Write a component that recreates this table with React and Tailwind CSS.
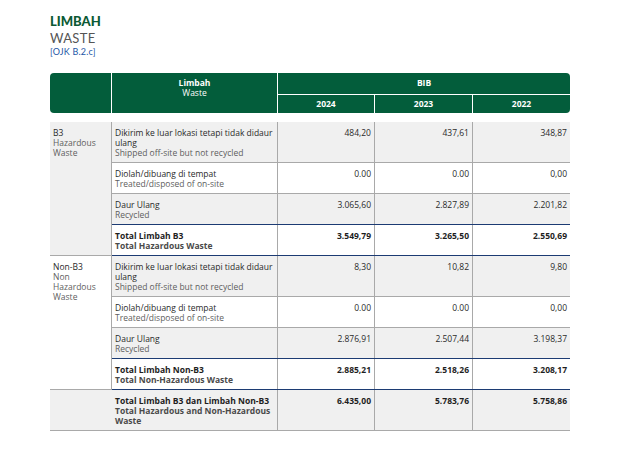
import React from 'react';

const groups = [
  {
    label: ['B3', 'Hazardous', 'Waste'],
    shaded: true,
    rows: [
      { id: ['Dikirim ke luar lokasi tetapi tidak didaur', 'ulang'], en: 'Shipped off-site but not recycled', vals: ['484,20', '437,61', '348,87'] },
      { id: ['Diolah/dibuang di tempat'], en: 'Treated/disposed of on-site', vals: ['0.00', '0.00', '0,00'] },
      { id: ['Daur Ulang'], en: 'Recycled', vals: ['3.065,60', '2.827,89', '2.201,82'] },
    ],
    total: { id: 'Total Limbah B3', en: 'Total Hazardous Waste', vals: ['3.549,79', '3.265,50', '2.550,69'] },
  },
  {
    label: ['Non-B3', 'Non', 'Hazardous', 'Waste'],
    shaded: false,
    rows: [
      { id: ['Dikirim ke luar lokasi tetapi tidak didaur', 'ulang'], en: 'Shipped off-site but not recycled', vals: ['8,30', '10,82', '9,80'] },
      { id: ['Diolah/dibuang di tempat'], en: 'Treated/disposed of on-site', vals: ['0.00', '0.00', '0,00'] },
      { id: ['Daur Ulang'], en: 'Recycled', vals: ['2.876,91', '2.507,44', '3.198,37'] },
    ],
    total: { id: 'Total Limbah Non-B3', en: 'Total Non-Hazardous Waste', vals: ['2.885,21', '2.518,26', '3.208,17'] },
  },
];

const Row = ({ row, idx }) => (
  <div
    className={`grid grid-cols-[166px_97px_98px_97px] ${idx % 2 === 0 ? 'bg-[#f0f0f0]' : 'bg-white'} ${idx > 0 ? 'border-t border-[#a9a9a9]' : ''}`}
  >
    <div className="border-r border-[#a9a9a9] pl-[3px] pt-[6px] pb-[4px]">
      {row.id.map((t) => (
        <div key={t} className="text-[#2a2a2a]">{t}</div>
      ))}
      <div className="text-[#5e5e5e]">{row.en}</div>
    </div>
    {row.vals.map((v, i) => (
      <div key={i} className={`text-right pr-[3px] pt-[6px] text-[#2a2a2a] ${i < 2 ? 'border-r border-[#a9a9a9]' : ''}`}>
        {v}
      </div>
    ))}
  </div>
);

const TotalRow = ({ total }) => (
  <div className="grid grid-cols-[166px_97px_98px_97px] bg-white border-t border-[#1c3b73] font-bold">
    <div className="border-r border-[#a9a9a9] pl-[3px] pt-[6px] pb-[4px]">
      <div className="text-[#1e1e1e]">{total.id}</div>
      <div className="text-[#4a4a4a]">{total.en}</div>
    </div>
    {total.vals.map((v, i) => (
      <div key={i} className={`text-right pr-[3px] pt-[6px] text-[#1e1e1e] ${i < 2 ? 'border-r border-[#a9a9a9]' : ''}`}>
        {v}
      </div>
    ))}
  </div>
);

const App = () => {
  return (
    <div className="w-[629px] h-[467px] bg-white font-['Open_Sans',sans-serif]">
      <div className="pl-[50px] pt-[14px] font-['Lato',sans-serif]">
        <div className="text-[13px] leading-[15.5px] font-black text-[#0b5a34]">LIMBAH</div>
        <div className="text-[13px] leading-[16px] tracking-[0.3px] text-[#555555]">WASTE</div>
        <div className="text-[9px] leading-[12px] tracking-[0.2px] text-[#2456a6]">[OJK B.2.c]</div>
      </div>

      <div className="ml-[50px] w-[520px] mt-[15px] text-[8.5px] leading-[10px]">
        {/* header */}
        <div className="grid grid-cols-[62px_166px_97px_98px_97px] grid-rows-[22px_18px] bg-[#035d3b] rounded-[4px] text-white">
          <div className="row-span-2 border-r border-white"></div>
          <div className="row-span-2 border-r border-white text-center pt-[5px]">
            <div className="font-bold">Limbah</div>
            <div>Waste</div>
          </div>
          <div className="col-span-3 border-b border-white flex items-center justify-center font-bold">BIB</div>
          <div className="border-r border-white flex items-center justify-center font-bold">2024</div>
          <div className="border-r border-white flex items-center justify-center font-bold">2023</div>
          <div className="flex items-center justify-center font-bold">2022</div>
        </div>

        {/* body */}
        <div className="mt-[9px]">
          {groups.map((g) => (
            <div key={g.label[0]} className="flex border-b border-[#1c3b73]">
              <div className={`w-[62px] shrink-0 border-r border-[#a9a9a9] pl-[3px] pt-[6px] text-[#2a2a2a] ${g.shaded ? 'bg-[#f0f0f0]' : 'bg-white'} -mb-px border-b border-b-[#a9a9a9]`}>
                <div>{g.label[0]}</div>
                {g.label.slice(1).map((t) => (
                  <div key={t} className="text-[#5e5e5e]">{t}</div>
                ))}
              </div>
              <div className="flex-1">
                {g.rows.map((r, i) => (
                  <Row key={i} row={r} idx={i} />
                ))}
                <TotalRow total={g.total} />
              </div>
            </div>
          ))}

          {/* grand total */}
          <div className="flex bg-[#f0f0f0] border-b border-[#a9a9a9] font-bold">
            <div className="w-[62px] shrink-0"></div>
            <div className="flex-1 grid grid-cols-[166px_97px_98px_97px]">
              <div className="border-r border-[#a9a9a9] pl-[3px] pt-[6px] pb-[4px]">
                <div className="text-[#1e1e1e]">Total Limbah B3 dan Limbah Non-B3</div>
                <div className="text-[#4a4a4a]">Total Hazardous and Non-Hazardous</div>
                <div className="text-[#4a4a4a]">Waste</div>
              </div>
              {['6.435,00', '5.783,76', '5.758,86'].map((v, i) => (
                <div key={i} className={`text-right pr-[3px] pt-[6px] text-[#1e1e1e] ${i < 2 ? 'border-r border-[#a9a9a9]' : ''}`}>
                  {v}
                </div>
              ))}
            </div>
          </div>
        </div>
      </div>
    </div>
  );
};

export default App;
